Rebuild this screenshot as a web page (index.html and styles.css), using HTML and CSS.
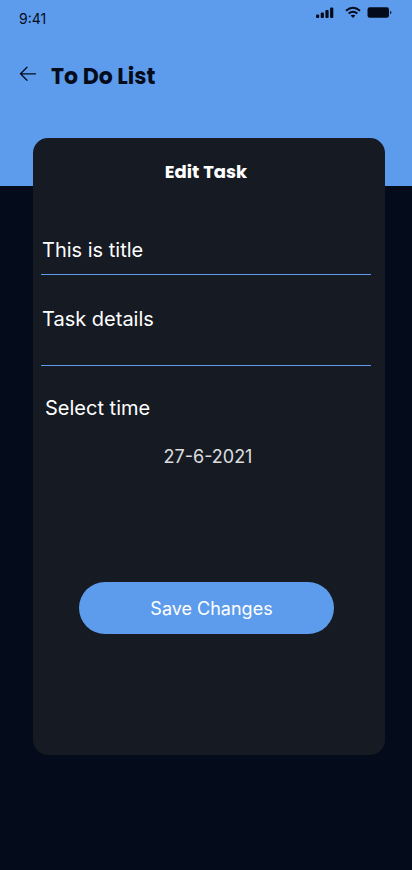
FILE: index.html
```html
<!DOCTYPE html>
<html lang="en">
<head>
<meta charset="utf-8">
<meta name="viewport" content="width=device-width, initial-scale=1">
<title>To Do List</title>
<link rel="stylesheet" href="styles.css">
</head>
<body>
<header class="header">
  <div class="status">
    <span class="clock">9:41</span>
    <div class="indicators">
      <svg class="signal" width="18" height="12" viewBox="0 0 18 12" aria-hidden="true">
        <rect x="0" y="8.500" width="3.200" height="3.500" rx="1"/>
        <rect x="4.700" y="6.500" width="3.200" height="5.500" rx="1"/>
        <rect x="9.400" y="4" width="3.200" height="8" rx="1"/>
        <rect x="14.100" y="1.500" width="3.200" height="10.500" rx="1"/>
      </svg>
      <svg class="wifi" width="16" height="12" viewBox="0 0 16 12" aria-hidden="true">
        <path d="M1 4.800Q8-1.200 15 4.800M3.600 7.600Q8 4 12.400 7.600" fill="none" stroke="currentColor" stroke-width="1.900"/>
        <path d="M5.600 9.600Q8 7.800 10.400 9.600L8 12Z"/>
      </svg>
      <svg class="battery" width="25" height="12" viewBox="0 0 25 12" aria-hidden="true">
        <rect x="0.500" y="1.300" width="21.500" height="10.500" rx="2.300"/>
        <path d="M23.200 4.800Q24.400 5.300 24.400 6.500Q24.400 7.800 23.200 8.300Z"/>
      </svg>
    </div>
  </div>
  <div class="titlebar">
    <button class="back" type="button" aria-label="Back">
      <svg width="18" height="16" viewBox="0 0 18 16" aria-hidden="true">
        <path d="M16.500 7.800H1.500M8 1.300L1.500 7.800L8 14.300" fill="none" stroke="currentColor" stroke-width="1.300" stroke-linecap="round" stroke-linejoin="round"/>
      </svg>
    </button>
    <h1 class="app-title">To Do List</h1>
  </div>
</header>
<main class="card">
  <h2 class="card-title">Edit Task</h2>
  <form class="form">
    <input class="field" type="text" aria-label="Title" value="This is title">
    <textarea class="field details" aria-label="Details">Task details</textarea>
    <label class="time-label" for="date">Select time</label>
    <input class="date" id="date" type="text" value="27-6-2021">
    <button class="save" type="submit">Save Changes</button>
  </form>
</main>
</body>
</html>
```
FILE: styles.css
```css
* { box-sizing: border-box; }

body {
  margin: 0;
  min-height: 100vh;
  background: #040c1b;
  color: #fff;
  font-family: Inter, "Liberation Sans", sans-serif;
}

button, input, textarea {
  margin: 0;
  padding: 0;
  border: 0;
  background: none;
  color: inherit;
  font: inherit;
}

.header {
  height: 186px;
  background: #5d9cec;
  color: #040c1b;
}

.status {
  display: flex;
  justify-content: space-between;
  padding: 6px 20px 0 19px;
}

.clock {
  padding-top: 3px;
  font-size: 14px;
  line-height: 20px;
}

.indicators {
  display: flex;
  height: 12px;
}

.indicators svg { fill: currentColor; }
.wifi { margin: 0 6px 0 11px; }

.titlebar {
  display: flex;
  align-items: center;
  gap: 14px;
  padding: 31px 19px 0;
}

.back {
  display: flex;
  padding-bottom: 6px;
}

.app-title,
.card-title {
  margin: 0;
  font-family: Poppins, Inter, sans-serif;
  font-weight: 700;
}

.app-title {
  font-size: 22px;
  line-height: 33px;
}

.card {
  min-height: 617px;
  margin: -48px 27px 24px 33px;
  padding: 20px 14px 24px 8px;
  border-radius: 15px;
  background: #161a22;
}

.card-title {
  font-size: 18px;
  line-height: 27px;
  text-align: center;
}

.form {
  display: flex;
  flex-direction: column;
  padding-top: 49px;
}

.field {
  display: block;
  width: 100%;
  height: 41px;
  padding: 0 1px 8px;
  border-bottom: 1px solid #5d9cec;
  border-radius: 0;
  font-size: 20px;
  line-height: 24px;
}

.details {
  height: 59px;
  margin-top: 32px;
  resize: none;
  overflow: hidden;
}

.time-label {
  margin: 30px 0 0 4px;
  font-size: 20px;
  line-height: 24px;
}

.date {
  height: 24px;
  margin-top: 25px;
  padding-left: 4px;
  font-size: 18px;
  line-height: 24px;
  text-align: center;
  opacity: 0.85;
}

.save {
  height: 52px;
  margin: 113px 37px 0 38px;
  padding: 2px 0 0 10px;
  border-radius: 26px;
  background: #5d9cec;
  font-size: 18px;
  line-height: 24px;
}
```
